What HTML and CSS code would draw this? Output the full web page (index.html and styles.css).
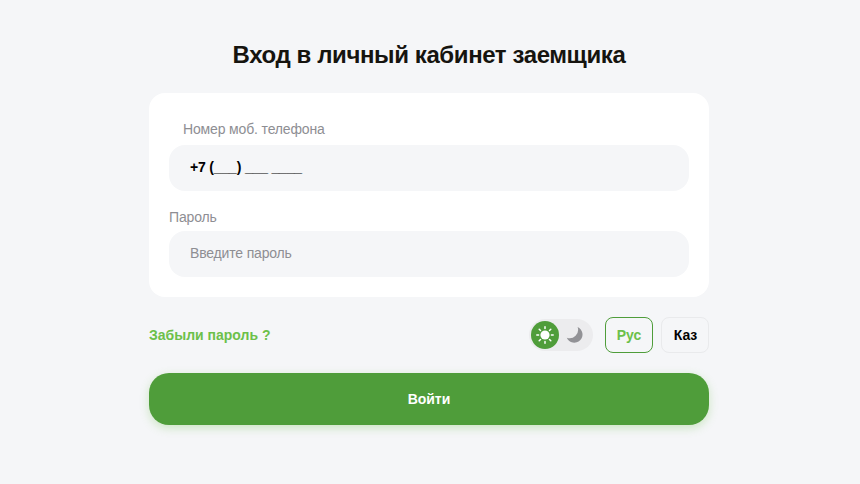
FILE: index.html
```
<!DOCTYPE html>
<html lang="ru">
<head>
<meta charset="utf-8">
<title>Вход</title>
<link rel="stylesheet" href="styles.css">
</head>
<body>
<main class="page">
  <h1 class="title">Вход в личный кабинет заемщика</h1>
  <section class="card">
    <label class="label label-phone">Номер моб. телефона</label>
    <div class="field field-phone">+7 (___) ___ ____</div>
    <label class="label label-pass">Пароль</label>
    <div class="field field-pass">Введите пароль</div>
  </section>
  <div class="row">
    <a class="forgot">Забыли пароль ?</a>
    <div class="controls">
      <div class="toggle">
        <span class="knob">
          <svg width="20" height="20" viewBox="0 0 20 20"><circle cx="10" cy="10" r="4.600" fill="#fff"/><g stroke="#fff" stroke-width="1.500" stroke-linecap="round"><path d="M10 1.800v1.800M10 16.400v1.800M1.800 10h1.800M16.400 10h1.800M4.200 4.200l1.300 1.300M14.500 14.500l1.300 1.300M4.200 15.800l1.300-1.300M14.500 5.500l1.300-1.300"/></g></svg>
        </span>
        <span class="moon">
          <svg width="18" height="18" viewBox="0 0 18 18"><path d="M11.600 1A8.200 8.200 0 1 1 .8 11.800 8.500 8.500 0 0 0 11.600 1z" fill="#929296"/></svg>
        </span>
      </div>
      <button class="lang lang-active">Рус</button>
      <button class="lang lang-kaz">Каз</button>
    </div>
  </div>
  <button class="submit">Войти</button>
</main>
</body>
</html>
```
FILE: styles.css
```
* { box-sizing: border-box; }
html, body { margin: 0; height: 100%; }
body { background: #f5f6f8; font-family: "Liberation Sans", Arial, sans-serif; overflow: hidden; }
.page { width: 560px; margin-left: 149px; padding-top: 41px; display: flex; flex-direction: column; }
.title { margin: 0 0 24px; height: 28px; line-height: 28px; font-size: 24px; font-weight: 700; color: #16140f; text-align: center; letter-spacing: -0.4px; }
.card { background: #fff; border-radius: 16px; padding: 20px; height: 204px; display: flex; flex-direction: column; }
.label { font-size: 14px; line-height: 16px; color: #8e8e93; display: block; letter-spacing: -0.15px; }
.label-phone { padding-left: 14px; margin-top: 8px; margin-bottom: 8px; }
.label-pass { margin-top: 18px; margin-bottom: 6px; }
.field { height: 46px; border-radius: 16px; background: #f5f6f8; padding-left: 21px; padding-bottom: 2px; display: flex; align-items: center; font-size: 14px; letter-spacing: -0.17px; }
.field-phone { font-weight: 700; color: #000; }
.field-pass { color: #8e8e93; }
.row { display: flex; justify-content: space-between; align-items: center; margin-top: 20px; height: 36px; }
.forgot { font-size: 14px; font-weight: 700; color: #6cc04a; }
.controls { display: flex; align-items: center; }
.toggle { width: 64px; height: 32px; border-radius: 16px; background: #ececee; padding: 2px; display: flex; align-items: center; margin-right: 12px; }
.knob { width: 28px; height: 28px; border-radius: 50%; background: #4f9d3a; display: flex; align-items: center; justify-content: center; }
.moon { width: 28px; height: 28px; display: flex; align-items: center; justify-content: center; margin-left: 2px; }
.lang { width: 48px; height: 36px; border-radius: 8px; border: 1px solid #e9eaec; background: #f5f6f8; font: 700 14px "Liberation Sans", Arial, sans-serif; letter-spacing: -0.1px; color: #000; padding: 0; margin: 0; }
.lang + .lang { margin-left: 8px; }
.lang-active { border-color: #4f9d3a; color: #6cc04a; }
.lang-kaz { padding-left: 1px; }
.submit { margin-top: 20px; height: 52px; width: 100%; border: 0; border-radius: 20px; background: #4f9d3a; color: #fff; font: 700 14px "Liberation Sans", Arial, sans-serif; letter-spacing: -0.05px; box-shadow: 0 3px 10px rgba(108, 192, 74, 0.3); }
```
